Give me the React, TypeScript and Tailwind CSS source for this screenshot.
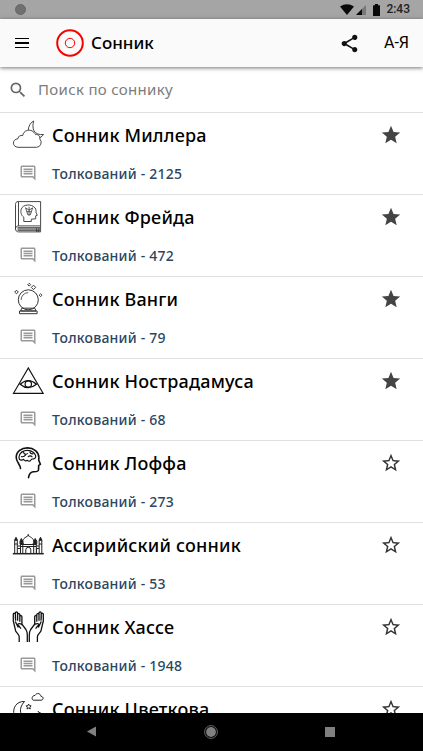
import { useState } from "react";
import type { ReactNode } from "react";

const CloudMoonIcon = () => (
  <svg viewBox="0 0 32 32" className="h-8 w-8" fill="none" stroke="#333" strokeWidth="0.9" strokeLinejoin="round">
    <path d="M6 28.300h18.500a4.900 4.900 0 0 0 3.300-8.300c.6-2.800-1.700-5-4.300-4.400C21.800 12 18.500 10.700 15.500 11.400c-3 .6-4.600 3-4.800 5.200-2.300-.6-4.600.6-4.700 3-6.300 1-6 8.200 0 8.700z" />
    <path d="M16.200 11.200c.3-4.200 2.500-7.900 5.500-9.200-.8 3-1.200 6.700.1 9.500 1.800 3.300 5.300 4.500 9.700 4-.8 1.400-2 2.400-3.700 3.200" />
  </svg>
);

const BookIcon = () => (
  <svg viewBox="0 0 32 32" className="h-8 w-8" fill="none" stroke="#333" strokeWidth="0.9">
    <path d="M3.500 28V3.500C3.500 1.500 4.500.6 6 .6h22.600v24.300H6.500c-4 0-4 6 0 6h22.100M6.500 1v24" />
    <path d="M5.500 26.600h23M5.500 28h23M5.500 29.400h23" stroke="#666" strokeWidth="1.100" />
    <path d="M28.600 24.900v6M24.500 27.200v3.500l1.200-.8 1.200.8v-3.500" strokeWidth="0.8" />
    <path d="M11.800 20.500v-4.200c-3-2.400-3.300-5-2.600-8C10.500 3.300 19.500 2.400 23 6.900c1.100 1.500 1.200 3.100 1 4.500l1.300 2.800-1.600.6v3l-4.400.4v2.300z" />
    <path d="M13.600 6.800l1.200 4 1.200 3.200h2.200l1.200-3.200 1.200-4M13.600 6.800l3.500 2.400 3.500-2.400M14.700 10.700h4.800M17.100 5.800V14" strokeWidth="0.8" />
  </svg>
);

const CrystalBallIcon = () => (
  <svg viewBox="0 0 32 32" className="h-8 w-8 overflow-visible" fill="none" stroke="#333" strokeWidth="1" strokeLinejoin="round">
    <circle cx="16.300" cy="16.800" r="10" />
    <path d="M9.100 17a7.300 7.300 0 0 1 7.100-7.400" strokeWidth="0.8" />
    <path d="M9.800 25.200h13l1.200 2.800H8.600zM7.500 28h17.600v2.700H7.500z" />
    <path d="M4.500 7.200l1.800 1.800-1.800 1.800L2.700 9zM21.500 2.200l2.200 2.200-2.200 2.200-2.200-2.200zM17.200.300l1.400 1.400-1.400 1.400-1.400-1.400zM28.600 10.800l1.400 1.400-1.400 1.400-1.400-1.400z" />
  </svg>
);

const PyramidEyeIcon = () => (
  <svg viewBox="0 0 32 32" className="h-8 w-8" fill="none" stroke="#111" strokeWidth="1.200">
    <path d="M16.300 3L1.500 28.300h29.600zM8.200 19.200q8-7.200 16.200 0-8.200 7-16.200 0z" />
    <circle cx="16.300" cy="19" r="3.200" />
  </svg>
);

const BrainHeadIcon = () => (
  <svg viewBox="0 0 32 32" className="h-8 w-8" fill="none" stroke="#111" strokeWidth="1.600" strokeLinecap="round" strokeLinejoin="round">
    <path d="M8.500 21.500C8.400 17.200 4.200 15.500 4.200 10.200 4.300 4.300 9.500.9 15.500.9c6.300 0 11.200 3.800 11.400 9.600l-.2 2.500 1.700 4.400-1.700 1-.2 4.600c-.2 1.900-2.700 1.800-5.400 1.700-2.900.5-4.100 2.500-4.600 6" />
    <path d="M7.500 12.500C5.900 9.200 8.300 4.800 12.300 3.800c4-1.300 9.300 0 11 4 .8 1.700.3 3.700-1.500 4.100-1.400.3-2.400-.2-2.800 1-.6 1.600-2.500 1.700-3.600.4-1.700 1.300-3.200.3-3.600-.9-1.500.8-3.100.9-4.300.1zM11.600 5.300c.6 2.100 2.400 2.400 3.800 1.300M9.500 9.600c2 .5 3.300-.5 4.100-1.700M16.300 9.700c1.100-1.200 2.600-1.200 3.700 0M18 5.200c.5 1.400 1.500 1.900 2.900 1.700" strokeWidth="1.200" />
  </svg>
);

const PalaceIcon = () => (
  <svg viewBox="0 0 32 32" className="h-8 w-8" fill="none" stroke="#222" strokeWidth="1">
    <path d="M.8 24.700h31" strokeWidth="1.500" />
    <path d="M2.700 24V11.300M5.300 24V11.300M27.200 24V11.300M29.800 24V11.300M8.500 24V15.500h15.800V24M10.800 15.500V24M21.700 15.500V24M2.500 15h3M27 15h3M8.500 17.500h15.800" />
    <path d="M11.500 15.200c-2.700-5.200 2.200-6.700 4.700-8.700 2.700 2 7.500 3.500 4.700 8.700M16.200 5v2M13.800 24v-3.200a2.500 2.500 0 0 1 5 0V24" />
    <path d="M4 8.300L2.500 11.300h3zM28.500 8.300L27 11.300h3zM9.300 9.500L8 12.300v3h2.800v-3zM23.200 9.500L22 12.300v3h2.800v-3z" fill="#222" />
    <path d="M5.500 17h3M24.500 17H27M5.500 19.500h3v4.500M24.500 24v-4.500H27" />
  </svg>
);

const HandIcon = () => (
  <g>
    <path d="M7.200 31v-5.300c0-2.100-1.800-3-3.500-5.500L1.300 10V3.200c0-1.400 2-1.400 2.100 0l.2 6.600M3.400 7.500V2c.1-1.500 2.100-1.300 2.200 0v7.800M5.700 3.500c.2-1.400 2-1.200 2.100 0v7.300M7.900 5.500c.2-1.400 2-1.200 2 0v8.800" />
    <path d="M9.900 13.200c-3.500-1.300-4.600-.2-3.700 1l2.800 3.500M9.900 13.200l4 5.300c1.200 1.800 1.500 3.200 1.400 5.600V31M3.300 10.500l3 6" />
  </g>
);

const HandsIcon = () => (
  <svg viewBox="0 0 32 32" className="h-8 w-8" fill="none" stroke="#111" strokeWidth="1.300" strokeLinejoin="round">
    <HandIcon />
    <g transform="translate(32.600 0) scale(-1 1)">
      <HandIcon />
    </g>
  </svg>
);

const NightSkyIcon = () => (
  <svg viewBox="0 0 32 32" className="h-8 w-8 overflow-visible" fill="none" stroke="#222" strokeWidth="1" strokeLinejoin="round">
    <path d="M12.500 8.500C4 8 .2 15.800 2.200 22c2.500 6 9.500 7 13 3-7.300-.6-9.400-9.500-2.700-16.500z" />
    <path d="M21.300 7.200h7.900c2.700-.4 2.500-3.700-.1-3.700C28-.4 24.500-.2 23 2.400c-3.200.1-3.700 4-1.700 4.800z" />
    <path d="M16.600 11l.8 1.700 1.800.2-1.300 1.300.4 1.800-1.700-.9-1.600.9.400-1.800-1.300-1.300 1.800-.2zM26 18l.8 1.500 1.500.2-1.100 1.100" />
  </svg>
);

const CommentIcon = () => (
  <svg viewBox="0 0 24 24" className="h-[18px] w-[18px]" fill="#999">
    <path d="M21.990 4c0-1.100-.89-2-1.990-2H4c-1.100 0-2 .9-2 2v12c0 1.100.9 2 2 2h14l4 4-.01-18zM20 4v13.170L18.830 16H4V4h16zM6 12h12v2H6zm0-3h12v2H6zm0-3h12v2H6z" />
  </svg>
);

const StarIcon = ({ filled }: { filled: boolean }) => (
  <svg viewBox="0 0 24 24" className="h-[22px] w-[22px]" fill={filled ? "#444" : "#333"}>
    {filled ? (
      <path d="M12 17.270L18.180 21l-1.640-7.030L22 9.240l-7.190-.61L12 2 9.190 8.630 2 9.240l5.460 4.730L5.820 21z" />
    ) : (
      <path d="M22 9.240l-7.190-.62L12 2 9.190 8.630 2 9.240l5.460 4.730L5.820 21 12 17.270 18.180 21l-1.630-7.030L22 9.240zM12 15.400l-3.760 2.270 1-4.280-3.320-2.880 4.380-.38L12 6.100l1.710 4.040 4.380.38-3.320 2.880 1 4.280L12 15.400z" />
    )}
  </svg>
);

type Book = {
  name: string;
  count?: number;
  icon: ReactNode;
  starred: boolean;
};

const books: Book[] = [
  { name: "Сонник Миллера", count: 2125, icon: <CloudMoonIcon />, starred: true },
  { name: "Сонник Фрейда", count: 472, icon: <BookIcon />, starred: true },
  { name: "Сонник Ванги", count: 79, icon: <CrystalBallIcon />, starred: true },
  { name: "Сонник Нострадамуса", count: 68, icon: <PyramidEyeIcon />, starred: true },
  { name: "Сонник Лоффа", count: 273, icon: <BrainHeadIcon />, starred: false },
  { name: "Ассирийский сонник", count: 53, icon: <PalaceIcon />, starred: false },
  { name: "Сонник Хассе", count: 1948, icon: <HandsIcon />, starred: false },
  { name: "Сонник Цветкова", icon: <NightSkyIcon />, starred: false },
];

export default function App() {
  const [starred, setStarred] = useState(books.map((b) => b.starred));

  const toggleStar = (index: number) => {
    setStarred(starred.map((s, i) => (i === index ? !s : s)));
  };

  return (
    <div className="flex h-[751px] w-full flex-col overflow-hidden bg-white font-['Noto_Sans',sans-serif] text-black">
      {/* Status bar */}
      <div className="flex h-[19px] shrink-0 items-center bg-[#a5a5a5] pr-[13px] pl-[15px]">
        <div className="h-[11px] w-[11px] rounded-full border border-[#666] bg-[#707070]" />
        <div className="ml-auto flex items-center">
          <svg viewBox="0 0 14 11" className="h-[11px] w-[14px]" fill="#0a0a0a">
            <path d="M0 2.500Q7-2 14 2.500L7 11z" />
          </svg>
          <svg viewBox="0 0 10 10" className="ml-[2px] h-[10px] w-[10px]">
            <path d="M10 0v10H0z" fill="#777" />
            <path d="M6 4v6H0z" fill="#0a0a0a" />
          </svg>
          <svg viewBox="0 0 7 12" className="ml-[7px] h-3 w-[7px]" fill="#0a0a0a">
            <path d="M2 0h3v1.200h1.500q.5 0 .5.500v9.800q0 .5-.5.500h-6q-.5 0-.5-.5V1.700q0-.5.500-.5H2z" />
          </svg>
          <span className="ml-[6px] font-['Roboto',sans-serif] text-[12px] leading-[19px] font-medium text-[#222]">2:43</span>
        </div>
      </div>

      {/* Toolbar */}
      <header className="z-10 flex h-12 shrink-0 items-center bg-[#fafafa] pr-[14px] pl-[15px] shadow-[0_1px_4px_rgba(0,0,0,0.55)]">
        <button className="flex w-[14px] flex-col gap-[3px]" aria-label="Меню">
          <span className="h-[1.500px] bg-black" />
          <span className="h-[1.500px] bg-black" />
          <span className="h-[1.500px] bg-black" />
        </button>
        <svg viewBox="0 0 28 28" className="ml-[27px] h-7 w-7" fill="none" stroke="#f80000">
          <circle cx="14" cy="14" r="12.800" strokeWidth="2" />
          <circle cx="14" cy="14" r="4.700" strokeWidth="1" />
        </svg>
        <h1 className="ml-[7px] text-[17px] font-medium">Сонник</h1>
        <button className="ml-auto" aria-label="Поделиться">
          <svg viewBox="0 0 24 24" className="h-[21px] w-[21px]" fill="#111">
            <path d="M18 16.080c-.76 0-1.440.3-1.960.77L8.910 12.700c.05-.23.090-.46.090-.7s-.04-.47-.09-.7l7.050-4.110c.54.5 1.250.81 2.040.81 1.660 0 3-1.340 3-3s-1.340-3-3-3-3 1.340-3 3c0 .24.040.47.090.7L8.040 9.810C7.500 9.310 6.790 9 6 9c-1.660 0-3 1.340-3 3s1.340 3 3 3c.79 0 1.500-.31 2.040-.81l7.120 4.160c-.05.21-.08.43-.08.65 0 1.610 1.310 2.920 2.920 2.920s2.920-1.310 2.920-2.920-1.310-2.920-2.920-2.920z" />
          </svg>
        </button>
        <button className="ml-[24px] w-[25px] text-right font-['Roboto',sans-serif] text-[16px] whitespace-nowrap">А-Я</button>
      </header>

      {/* Search */}
      <div className="flex h-[45px] shrink-0 items-center pl-[8px]">
        <svg viewBox="0 0 24 24" className="h-5 w-5" fill="#666">
          <path d="M15.500 14h-.79l-.28-.27A6.471 6.471 0 0 0 16 9.500 6.500 6.500 0 1 0 9.500 16c1.610 0 3.090-.59 4.230-1.570l.27.28v.79l5 4.990L20.490 19l-4.990-5zm-6 0C7.010 14 5 11.990 5 9.500S7.010 5 9.500 5 14 7.010 14 9.500 11.990 14 9.500 14z" />
        </svg>
        <input
          className="ml-[10px] w-72 text-[15px] tracking-[0.32px] outline-none placeholder:text-[#7c7c7c]"
          placeholder="Поиск по соннику"
        />
      </div>

      {/* Dream books */}
      <ul className="min-h-0 flex-1 overflow-hidden">
        {books.map((book, index) => (
          <li key={book.name} className="h-[82px] border-t border-[#e0e0e0] pt-[6px] pr-[21px] pl-3">
            <div className="flex h-8 items-center">
              {book.icon}
              <h2 className="ml-2 text-[18px] font-medium tracking-[0.2px]">{book.name}</h2>
              <button className="ml-auto" onClick={() => toggleStar(index)} aria-label="В избранное">
                <StarIcon filled={starred[index]} />
              </button>
            </div>
            {book.count !== undefined && (
              <div className="mt-3 flex h-5 items-center pl-[7px]">
                <CommentIcon />
                <p className="ml-[15px] text-[14px] font-medium tracking-[0.22px] text-[#2b4660]">Толкований - {book.count}</p>
              </div>
            )}
          </li>
        ))}
      </ul>

      {/* Navigation bar */}
      <nav className="flex h-[38px] shrink-0 items-center bg-black pb-[1px] pl-[87px]">
        <svg viewBox="0 0 10 11" className="h-[11px] w-[9px]" fill="#808080">
          <path d="M0 5.500L10 0v11z" />
        </svg>
        <svg viewBox="0 0 14 14" className="ml-[108px] h-[14px] w-[14px]">
          <circle cx="7" cy="7" r="6.400" fill="none" stroke="#808080" strokeWidth="0.800" />
          <circle cx="7" cy="7" r="4.900" fill="#808080" />
        </svg>
        <div className="ml-[107px] h-[10px] w-[10px] bg-[#808080]" />
      </nav>
    </div>
  );
}
